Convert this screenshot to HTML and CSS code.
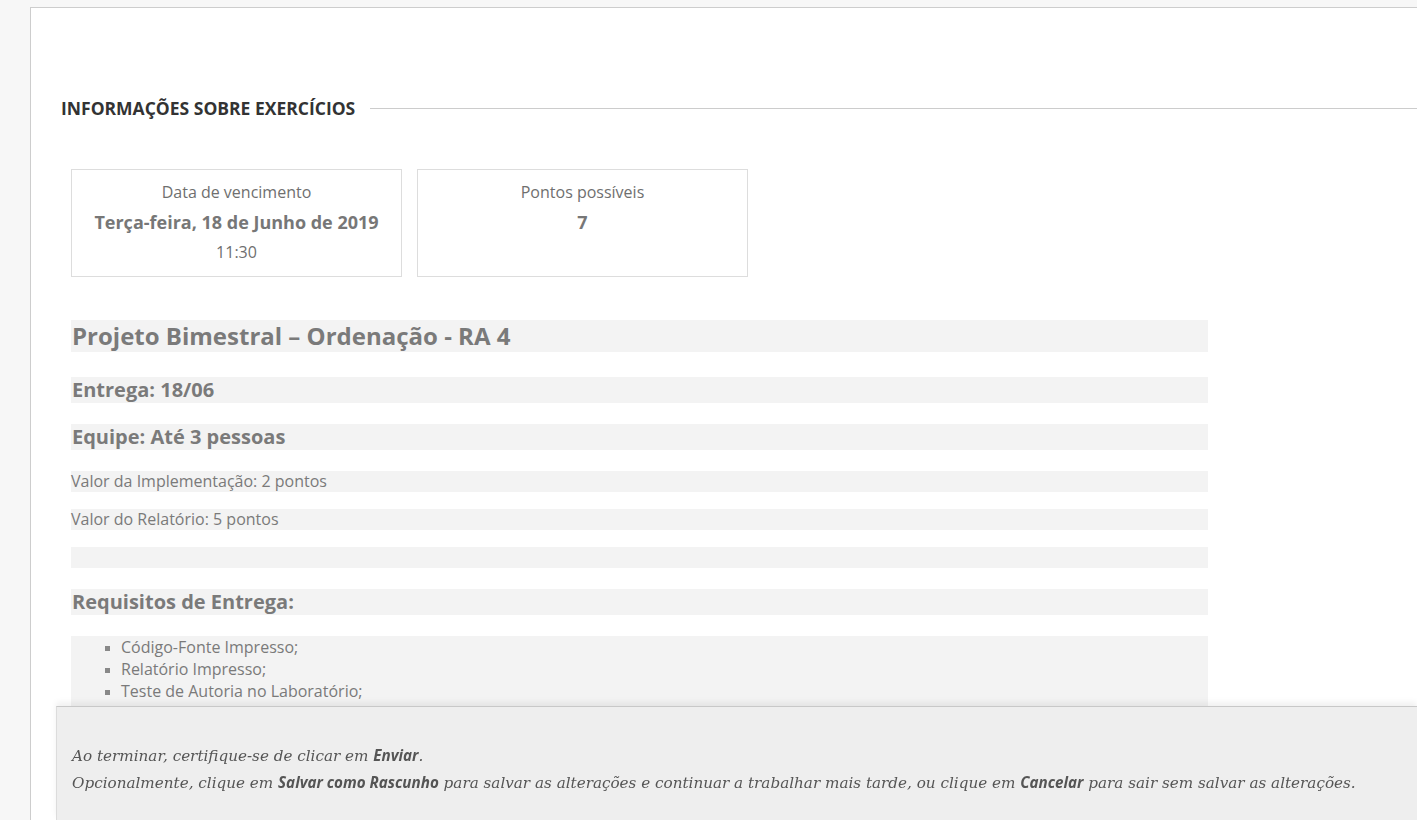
FILE: index.html
```html
<!DOCTYPE html>
<html lang="pt">
<head>
<meta charset="utf-8">
<title>Informações sobre exercícios</title>
<link rel="stylesheet" href="styles.css">
</head>
<body>
<div class="panel">
  <div class="section-head">
    <h2 class="section-title">INFORMAÇÕES SOBRE EXERCÍCIOS</h2>
    <div class="section-rule"></div>
  </div>
  <div class="cards">
    <div class="card">
      <div class="card-label">Data de vencimento</div>
      <div class="card-value">Terça-feira, 18 de Junho de 2019</div>
      <div class="card-sub">11:30</div>
    </div>
    <div class="card">
      <div class="card-label">Pontos possíveis</div>
      <div class="card-value">7</div>
    </div>
  </div>
  <div class="content">
    <h1 class="block title">Projeto Bimestral – Ordenação - RA 4</h1>
    <h3 class="block sub sub-first">Entrega: 18/06</h3>
    <h3 class="block sub">Equipe: Até 3 pessoas</h3>
    <p class="block text text-first">Valor da Implementação: 2 pontos</p>
    <p class="block text">Valor do Relatório: 5 pontos</p>
    <p class="block text"></p>
    <h3 class="block sub">Requisitos de Entrega:</h3>
    <ul class="block list">
      <li>Código-Fonte Impresso;</li>
      <li>Relatório Impresso;</li>
      <li>Teste de Autoria no Laboratório;</li>
      <li>Apresentação do Trabalho;</li>
    </ul>
  </div>
</div>
<div class="footer">
  <p class="footer-line">Ao terminar, certifique-se de clicar em <strong>Enviar</strong>.</p>
  <p class="footer-line">Opcionalmente, clique em <strong>Salvar como Rascunho</strong> para salvar as alterações e continuar a trabalhar mais tarde, ou clique em <strong>Cancelar</strong> para sair sem salvar as alterações.</p>
</div>
</body>
</html>
```

FILE: styles.css
```css
html, body {
  margin: 0;
  padding: 0;
}
body {
  background: #f7f7f7;
  font-family: "Open Sans", "Liberation Sans", sans-serif;
  color: #777;
  overflow: hidden;
  height: 820px;
}
.panel {
  margin: 7px 0 0 30px;
  background: #fff;
  border: 1px solid #cdcdcd;
  border-right: none;
  min-height: 900px;
}
.section-head {
  display: flex;
  align-items: center;
  margin-top: 90px;
  padding-left: 30px;
  height: 20px;
}
.section-title {
  margin: 0;
  font-size: 17.5px;
  font-weight: 700;
  line-height: 20px;
  color: #333;
}
.section-rule {
  flex: 1;
  height: 1px;
  background: #cccccc;
  margin-left: 15px;
}
.cards {
  display: flex;
  gap: 15px;
  margin-top: 51px;
  padding-left: 40px;
}
.card {
  width: 329px;
  border: 1px solid #dddddd;
  padding: 7px 0 9px;
  text-align: center;
  height: 90px;
}
.card-label {
  font-size: 16px;
  line-height: 30px;
  color: #6f6f6f;
}
.card-value {
  font-size: 18px;
  font-weight: 700;
  line-height: 30px;
  color: #777;
}
.card-sub {
  font-size: 16px;
  line-height: 30px;
  color: #6f6f6f;
}
.content {
  padding-left: 40px;
  width: 1137px;
  margin-top: 43px;
}
.block {
  background: #f3f3f3;
  margin: 0;
  color: #7a7a7a;
}
.title {
  font-size: 24px;
  font-weight: 700;
  line-height: 32px;
  padding-left: 1px;
}
.sub {
  font-size: 20px;
  font-weight: 700;
  line-height: 26px;
  margin-top: 21px;
  padding-left: 1px;
}
.sub-first {
  margin-top: 25px;
}
.text {
  font-size: 16px;
  line-height: 21px;
  min-height: 21px;
  margin-top: 17px;
}
.text-first {
  margin-top: 21px;
}
.list {
  margin-top: 21px;
  padding: 0 0 0 50px;
  list-style: square;
  font-size: 16px;
  line-height: 22px;
}
.list li::marker {
  color: #888;
  font-size: 13px;
}
.footer {
  position: fixed;
  left: 56px;
  right: 0;
  bottom: 0;
  height: 114px;
  background: #eeeeee;
  border-top: 1px solid #c8c8c8;
  border-left: 1px solid #dcdcdc;
  box-shadow: 0 -4px 6px rgba(0, 0, 0, 0.06);
  padding: 35px 0 0 15px;
  box-sizing: border-box;
}
.footer-line {
  margin: 0;
  font-family: "DejaVu Serif", Georgia, serif;
  font-style: italic;
  font-size: 15.2px;
  line-height: 26px;
  color: #555;
}
.footer-line strong {
  font-family: "Open Sans", "Liberation Sans", sans-serif;
  font-weight: 700;
  font-style: italic;
  color: #555;
}
```
